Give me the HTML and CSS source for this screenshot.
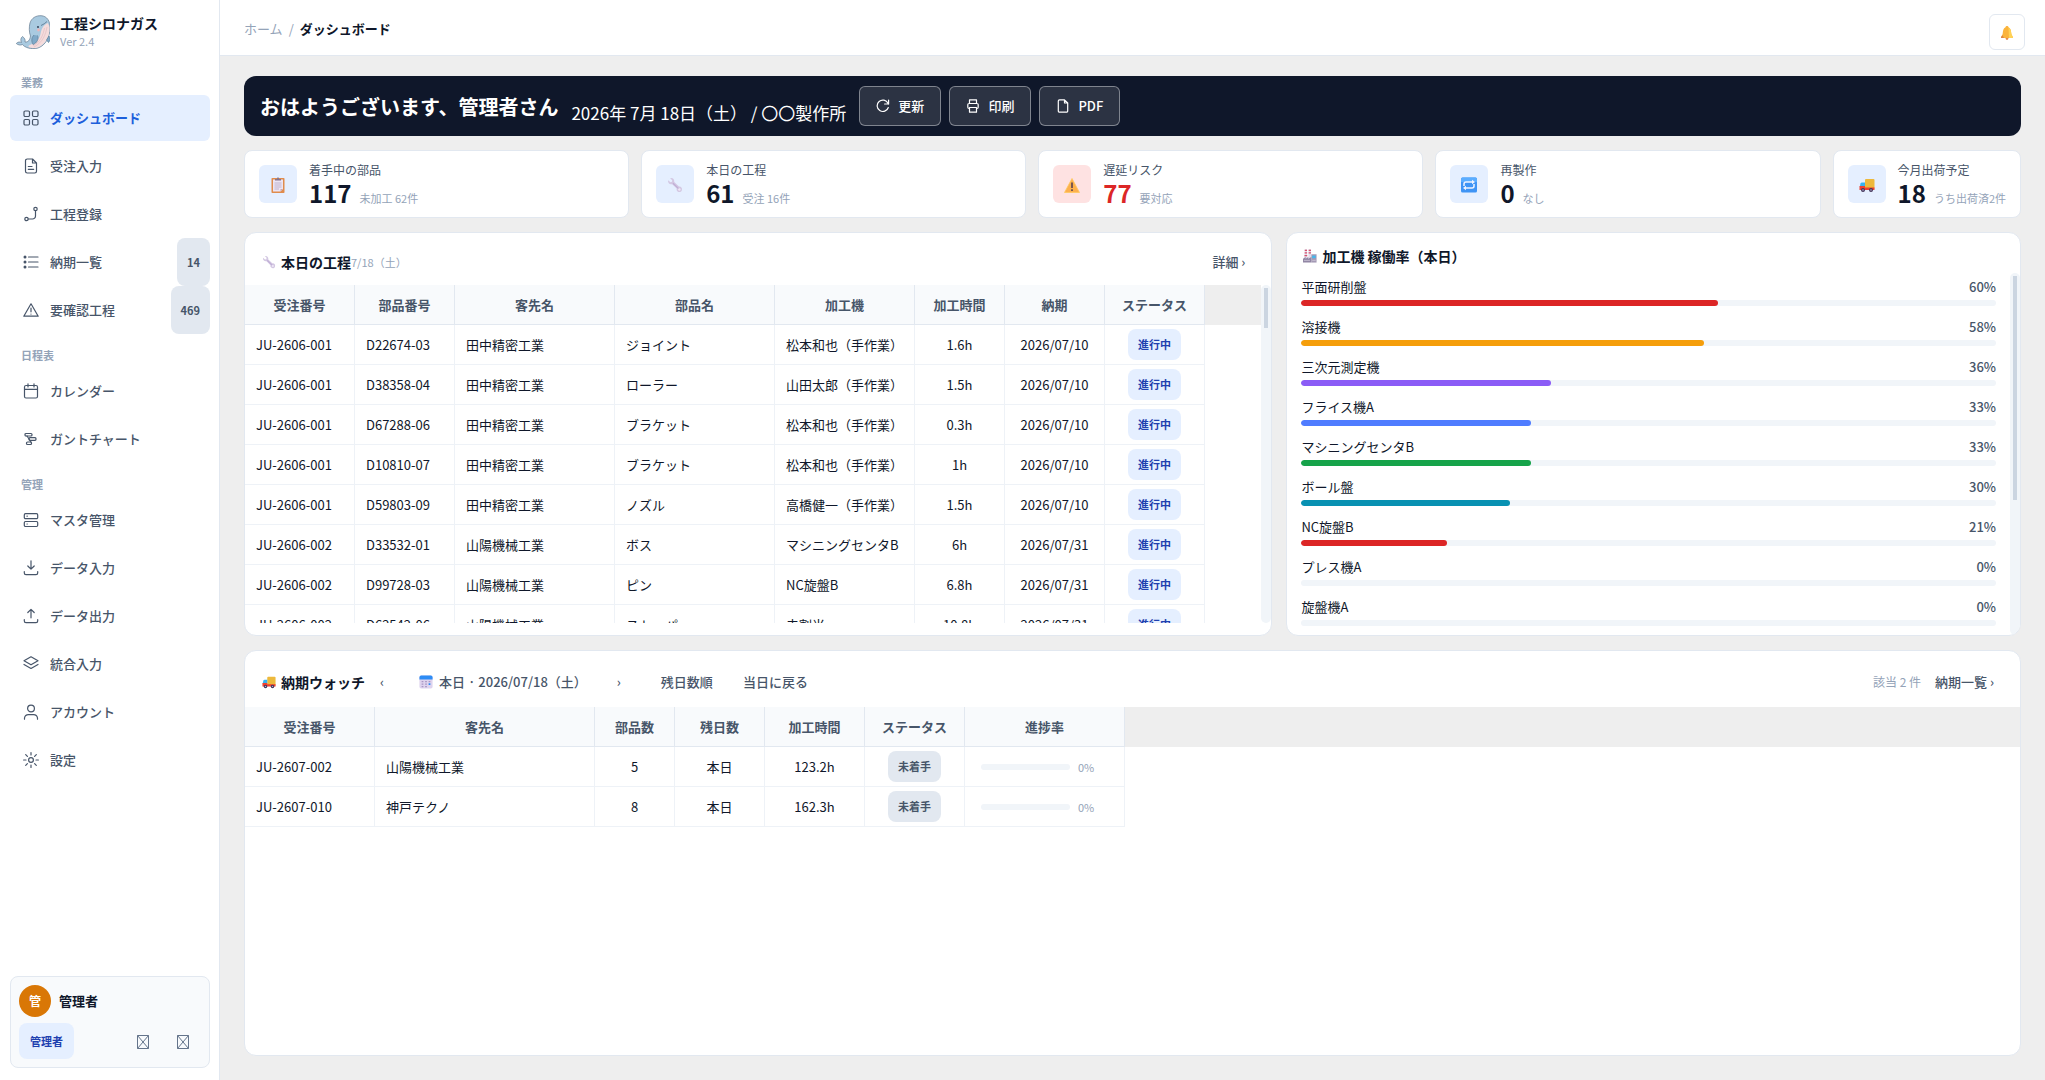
FILE: index.html
```
<!DOCTYPE html>
<html lang="ja">
<head>
    <meta charset="UTF-8">
    <meta name="viewport" content="width=device-width, initial-scale=1.0">
    <title>ダッシュボード - 工程シロナガス</title>
    <link rel="stylesheet" href="styles.css">
</head>
<body>
    <!-- Shared pictograms -->
    <svg class="symbols" aria-hidden="true">
        <symbol id="wrench" viewBox="0 0 16 16">
            <path d="M1.2 3.2 3.4 5.2 5 4.8 5.2 3.2 3.2 1.2C5.600.6 7.600 2.200 7.200 5L12 9.600C14 9.300 15.600 11.200 14.800 13.400 13.900 15.600 11 15.600 9.900 13.800 9.500 13 9.500 12.300 9.700 11.600L5.200 7.200C2.800 7.600.6 5.800 1.200 3.200Z" fill="#d3c7e2"/>
            <path d="M6 6.200 11.500 11.600" stroke="#bfaed6" stroke-width="1.200"/>
            <circle cx="12.400" cy="12.500" r="1.200" fill="#efe8f6"/>
        </symbol>
        <symbol id="truck" viewBox="0 0 16 16">
            <rect x="6" y="2" width="9.500" height="10" rx="1" fill="#edb93c"/>
            <path d="M1.500 6.500Q1.800 5.500 3 5.500H6V10H.8Z" fill="#35b2ef"/>
            <path d="M.5 9H6V10.500H15.500V13H.5Z" fill="#f0402f"/>
            <circle cx="4" cy="13" r="2" fill="#43355c"/>
            <circle cx="4" cy="13" r=".8" fill="#b9aecb"/>
            <circle cx="12" cy="13" r="2" fill="#43355c"/>
            <circle cx="12" cy="13" r=".8" fill="#b9aecb"/>
        </symbol>
    </svg>

    <aside class="sidebar">
        <div class="brand">
            <svg class="brand-logo" viewBox="0 0 34 34" aria-hidden="true">
                <path d="M.3 28.500C2 26.500 4 27 5.500 27.500 4.500 25.500 4.500 23 6.500 21.500 8.500 23 9.500 24.500 9 27 12 27.500 14 25 14.500 21 13 17 13 12 14 8 15.500 3 20 .5 25 .7 31 1 34.200 6 34 13 33.800 22 30 30 22 33 15 35 8 32 6.500 29.500 4.500 30.500 2 30 .3 28.500Z" fill="#a9cae0" stroke="#71869a" stroke-width=".8"/>
                <path d="M31.500 8C26 11 25.500 15 24.500 19 23.500 24 20 27.500 13 30.500 11 32 15 33.500 20 33 29 31 34 22 33.500 12 33 10 32.500 9 31.500 8Z" fill="#f5dcdc"/>
                <path d="M31 12C29.500 20 27 27 18 32M28.500 13C27 21 24 27 17 31" fill="none" stroke="#dfbfc4" stroke-width=".7"/>
                <path d="M25 10.500Q28.500 9 31 6.500" fill="none" stroke="#55718b" stroke-width=".8"/>
                <circle cx="22" cy="12" r=".9" fill="#26364d"/>
                <circle cx="22.500" cy="15" r="1.400" fill="#ecb4b8"/>
                <path d="M18 20C15 23 15.500 27 17 29.500 21 28 23 24 21.500 20.500M33 21C34.500 23 34 26 32.500 27.500L30.500 25Z" fill="#7fa9c8" stroke="#5f7f9a" stroke-width=".7"/>
            </svg>
            <div>
                <div class="brand-name">工程シロナガス</div>
                <div class="brand-version">Ver 2.4</div>
            </div>
        </div>

        <nav class="nav">
            <h2 class="nav-label">業務</h2>
            <a class="nav-item active" href="#">
                <svg class="icon" viewBox="0 0 16 16"><rect x="1" y="1" width="5.500" height="5.500" rx="1.200"/><rect x="9.500" y="1" width="5.500" height="5.500" rx="1.200"/><rect x="1" y="9.500" width="5.500" height="5.500" rx="1.200"/><rect x="9.500" y="9.500" width="5.500" height="5.500" rx="1.200"/></svg>
                ダッシュボード
            </a>
            <a class="nav-item" href="#">
                <svg class="icon" viewBox="0 0 16 16"><path d="M9.500 1H4.200A1.700 1.700 0 0 0 2.500 2.700V13.300A1.700 1.700 0 0 0 4.200 15H11.800A1.700 1.700 0 0 0 13.500 13.300V5ZM9.500 1V5H13.500M5.300 8.500H9M5.300 11.300H10.700"/></svg>
                受注入力
            </a>
            <a class="nav-item" href="#">
                <svg class="icon" viewBox="0 0 16 16"><circle cx="3.500" cy="13" r="1.700"/><circle cx="12.500" cy="3" r="1.700"/><path d="M5.200 13H9.500A3 3 0 0 0 12.500 10V4.700"/></svg>
                工程登録
            </a>
            <a class="nav-item" href="#">
                <svg class="icon" viewBox="0 0 16 16"><path d="M5.500 3H15M5.500 8H15M5.500 13H15"/><path class="dots" d="M2 3H2.010M2 8H2.010M2 13H2.010"/></svg>
                納期一覧
                <span class="nav-count">14</span>
            </a>
            <a class="nav-item" href="#">
                <svg class="icon" viewBox="0 0 16 16"><path d="M8 1.800 15.200 14.200H.8ZM8 6V9.800M8 12V12.100"/></svg>
                要確認工程
                <span class="nav-count">469</span>
            </a>

            <h2 class="nav-label">日程表</h2>
            <a class="nav-item" href="#">
                <svg class="icon" viewBox="0 0 16 16"><rect x="1.500" y="2.500" width="13" height="12.500" rx="1.500"/><path d="M1.500 6.300H14.500M5 .8V4M11 .8V4"/></svg>
                カレンダー
            </a>
            <a class="nav-item" href="#">
                <svg class="icon" viewBox="0 0 16 16"><rect x="2" y="2.500" width="7" height="2.500" rx="1"/><rect x="6" y="6.700" width="7" height="2.600" rx="1"/><rect x="3.500" y="11" width="5" height="2.500" rx="1"/><path d="M4 5 8 11"/></svg>
                ガントチャート
            </a>

            <h2 class="nav-label">管理</h2>
            <a class="nav-item" href="#">
                <svg class="icon" viewBox="0 0 16 16"><rect x="1.300" y="1.700" width="13.400" height="5" rx="1.200"/><rect x="1.300" y="9.500" width="13.400" height="5" rx="1.200"/><path d="M4 4.200H4.300M4 12H4.300"/></svg>
                マスタ管理
            </a>
            <a class="nav-item" href="#">
                <svg class="icon" viewBox="0 0 16 16"><path d="M8 .8V9M4.800 6 8 9.200 11.200 6M1.300 11.500V13A1.700 1.700 0 0 0 3 14.700H13A1.700 1.700 0 0 0 14.700 13V11.500"/></svg>
                データ入力
            </a>
            <a class="nav-item" href="#">
                <svg class="icon" viewBox="0 0 16 16"><path d="M8 9.800V1.300M4.800 4.500 8 1.300 11.200 4.500M1.300 11.500V13A1.700 1.700 0 0 0 3 14.700H13A1.700 1.700 0 0 0 14.700 13V11.500"/></svg>
                データ出力
            </a>
            <a class="nav-item" href="#">
                <svg class="icon" viewBox="0 0 16 16"><path d="M8 .8 15 4.800 8 8.800 1 4.800ZM1 8.500 8 12.500 15 8.500"/></svg>
                統合入力
            </a>
            <a class="nav-item" href="#">
                <svg class="icon" viewBox="0 0 16 16"><circle cx="8" cy="4.500" r="3.400"/><path d="M1.500 15.200V14A4 4 0 0 1 5.500 10.700H10.500A4 4 0 0 1 14.500 14V15.200"/></svg>
                アカウント
            </a>
            <a class="nav-item" href="#">
                <svg class="icon" viewBox="0 0 16 16"><circle cx="8" cy="8" r="2.400"/><path d="M8 .6V3M8 13V15.400M.6 8H3M13 8H15.400M2.700 2.700 4.400 4.400M11.600 11.600 13.300 13.300M2.700 13.300 4.400 11.600M11.600 4.400 13.300 2.700"/></svg>
                設定
            </a>
        </nav>

        <div class="user-card">
            <div class="user-row">
                <span class="avatar">管</span>
                <span class="user-name">管理者</span>
            </div>
            <div class="user-row">
                <span class="role">管理者</span>
                <div class="user-actions">
                    <button type="button" aria-label="パスワード変更"><svg viewBox="0 0 12 14"><path d="M.5.5H11.500V13.500H.5ZM.5.5 11.500 13.500M11.500.5.5 13.500"/></svg></button>
                    <button type="button" aria-label="ログアウト"><svg viewBox="0 0 12 14"><path d="M.5.5H11.500V13.500H.5ZM.5.5 11.500 13.500M11.500.5.5 13.500"/></svg></button>
                </div>
            </div>
        </div>
    </aside>

    <div class="page">
        <header class="topbar">
            <nav class="breadcrumb">
                <a href="#">ホーム</a>
                <span>/</span>
                <strong>ダッシュボード</strong>
            </nav>
            <button class="bell" type="button" aria-label="通知">
                <svg viewBox="0 0 16 16"><path d="M8 1C9 1 9.500 1.700 9.500 2.300 11.800 3.300 12 6 12.300 8.500 12.500 10.300 14 11 14 13H2C2 11 3.500 10.300 3.700 8.500 4 6 4.200 3.300 6.500 2.300 6.500 1.700 7 1 8 1Z" fill="#fbb43c"/><path d="M9.500 2.500C11.800 3.500 12 6 12.300 8.500 12.500 10.300 14 11 14 13H10Z" fill="#ffd256"/><path d="M2 13C2 11.800 2.800 11 3.300 10.300L5 13Z" fill="#dc8446"/><path d="M6.500 13H9.500Q9.300 15 8 15T6.500 13Z" fill="#e58a4a"/></svg>
            </button>
        </header>

        <main class="content">
            <section class="hero">
                <h1>おはようございます、管理者さん</h1>
                <p>2026年 7月 18日（土） / 〇〇製作所</p>
                <div class="hero-actions">
                    <button type="button"><svg class="icon" viewBox="0 0 14 14"><path d="M12.600 1V5H8.600M12.300 8.500A5.700 5.700 0 1 1 12 4.300L12.600 5"/></svg>更新</button>
                    <button type="button"><svg class="icon" viewBox="0 0 14 14"><path d="M3.500 4.500V.8H10.500V4.500M3.500 9.500H3A1.200 1.200 0 0 1 1.800 8.300V5.700A1.200 1.200 0 0 1 3 4.500H11A1.200 1.200 0 0 1 12.200 5.700V8.300A1.200 1.200 0 0 1 11 9.500H10.500M3.500 8.500H10.500V13.200H3.500Z"/></svg>印刷</button>
                    <button type="button"><svg class="icon" viewBox="0 0 14 14"><path d="M8.500.8H3.500A1.200 1.200 0 0 0 2.300 2V12A1.200 1.200 0 0 0 3.500 13.200H10.500A1.200 1.200 0 0 0 11.700 12V4ZM8.500.8V4H11.700"/></svg>PDF</button>
                </div>
            </section>

            <section class="stats">
                <div class="stat">
                    <span class="stat-icon"><svg viewBox="0 0 16 16"><rect x="1.500" y="1" width="13" height="15" rx=".8" fill="#e08c4d"/><path d="M3 2.500H13V12L10.500 14.500H3Z" fill="#ece4f3"/><path d="M10.500 14.500V12H13Z" fill="#c8a9b5"/><path d="M5 3.500V2H7Q7 .3 8 .3T9 2H11V3.500Z" fill="#85758f"/><path d="M4.500 6H11.500M4.500 8H11.500M4.500 10H11.500M4.500 12H9" stroke="#b6a6c4" stroke-width=".8"/></svg></span>
                    <div>
                        <div class="stat-label">着手中の部品</div>
                        <div class="stat-value">117 <small>未加工 62件</small></div>
                    </div>
                </div>
                <div class="stat">
                    <span class="stat-icon"><svg><use href="#wrench"/></svg></span>
                    <div>
                        <div class="stat-label">本日の工程</div>
                        <div class="stat-value">61 <small>受注 16件</small></div>
                    </div>
                </div>
                <div class="stat danger">
                    <span class="stat-icon"><svg viewBox="0 0 16 16"><path d="M8 1.500 15.500 15.500H.5Z" fill="#fdb04d" stroke="#ffc95e" stroke-width=".8" stroke-linejoin="round"/><path d="M7.200 5.500H8.800V11H7.200ZM7.200 12.300H8.800V14H7.200Z" fill="#59424f"/></svg></span>
                    <div>
                        <div class="stat-label">遅延リスク</div>
                        <div class="stat-value">77 <small>要対応</small></div>
                    </div>
                </div>
                <div class="stat">
                    <span class="stat-icon"><svg viewBox="0 0 16 16"><rect y=".5" width="16" height="15" rx="1.500" fill="#3f94f5"/><path d="M0 2A1.500 1.500 0 0 1 1.500.5H14.500A1.500 1.500 0 0 1 16 2V5H0Z" fill="#5badff"/><path d="M3 9V7A2 2 0 0 1 5 5H12M13 7V9A2 2 0 0 1 11 11H4" fill="none" stroke="#f0f3ff" stroke-width="1.500"/><path d="M11 2.800 14 5 11 7.200ZM5 8.800 2 11 5 13.200Z" fill="#f0f3ff"/></svg></span>
                    <div>
                        <div class="stat-label">再製作</div>
                        <div class="stat-value">0 <small>なし</small></div>
                    </div>
                </div>
                <div class="stat">
                    <span class="stat-icon"><svg><use href="#truck"/></svg></span>
                    <div>
                        <div class="stat-label">今月出荷予定</div>
                        <div class="stat-value">18 <small>うち出荷済2件</small></div>
                    </div>
                </div>
            </section>

            <div class="panels">
                <section class="panel">
                    <div class="panel-head">
                        <svg class="emoji"><use href="#wrench"/></svg>
                        <h2>本日の工程</h2><span class="muted">7/18（土）</span>
                        <a class="more" href="#">詳細 ›</a>
                    </div>
                    <div class="scroll-area">
                        <div class="table-wrap">
                            <table>
                                <colgroup><col class="w110"><col class="w100"><col class="w160"><col class="w160"><col class="w140"><col class="w90"><col class="w100"><col class="w100"><col></colgroup>
                                <thead>
                                    <tr><th>受注番号</th><th>部品番号</th><th>客先名</th><th>部品名</th><th>加工機</th><th>加工時間</th><th>納期</th><th>ステータス</th><td></td></tr>
                                </thead>
                                <tbody>
                                    <tr><td>JU-2606-001</td><td>D22674-03</td><td>田中精密工業</td><td>ジョイント</td><td>松本和也（手作業）</td><td class="mid">1.6h</td><td class="mid">2026/07/10</td><td class="mid"><span class="tag">進行中</span></td><td></td></tr>
                                    <tr><td>JU-2606-001</td><td>D38358-04</td><td>田中精密工業</td><td>ローラー</td><td>山田太郎（手作業）</td><td class="mid">1.5h</td><td class="mid">2026/07/10</td><td class="mid"><span class="tag">進行中</span></td><td></td></tr>
                                    <tr><td>JU-2606-001</td><td>D67288-06</td><td>田中精密工業</td><td>ブラケット</td><td>松本和也（手作業）</td><td class="mid">0.3h</td><td class="mid">2026/07/10</td><td class="mid"><span class="tag">進行中</span></td><td></td></tr>
                                    <tr><td>JU-2606-001</td><td>D10810-07</td><td>田中精密工業</td><td>ブラケット</td><td>松本和也（手作業）</td><td class="mid">1h</td><td class="mid">2026/07/10</td><td class="mid"><span class="tag">進行中</span></td><td></td></tr>
                                    <tr><td>JU-2606-001</td><td>D59803-09</td><td>田中精密工業</td><td>ノズル</td><td>高橋健一（手作業）</td><td class="mid">1.5h</td><td class="mid">2026/07/10</td><td class="mid"><span class="tag">進行中</span></td><td></td></tr>
                                    <tr><td>JU-2606-002</td><td>D33532-01</td><td>山陽機械工業</td><td>ボス</td><td>マシニングセンタB</td><td class="mid">6h</td><td class="mid">2026/07/31</td><td class="mid"><span class="tag">進行中</span></td><td></td></tr>
                                    <tr><td>JU-2606-002</td><td>D99728-03</td><td>山陽機械工業</td><td>ピン</td><td>NC旋盤B</td><td class="mid">6.8h</td><td class="mid">2026/07/31</td><td class="mid"><span class="tag">進行中</span></td><td></td></tr>
                                    <tr><td>JU-2606-002</td><td>D62542-06</td><td>山陽機械工業</td><td>ストッパ</td><td>未割当</td><td class="mid">10.8h</td><td class="mid">2026/07/31</td><td class="mid"><span class="tag">進行中</span></td><td></td></tr>
                                </tbody>
                            </table>
                        </div>
                        <div class="scrollbar"><div class="thumb thumb-short"></div></div>
                    </div>
                </section>

                <section class="panel">
                    <div class="panel-head compact">
                        <svg class="emoji" viewBox="0 0 16 16"><path d="M2 0H4.500L5 11H1.500ZM6.500 0H9L9.500 11H6Z" fill="#e3dcea"/><path d="M2 1.500H4.600M1.900 4.500H4.700M6.500 1.500H9.100M6.400 4.500H9.200M1.700 7.500H4.800" stroke="#d6526f" stroke-width="1.500"/><path d="M9.500 6H15.500V15.500H9.500Z" fill="#a49ab5"/><path d="M0 11 3 9V11L6 9V11L9.500 9V15.500H0Z" fill="#9186a4"/><path d="M10.500 7.500H14.500V10.500H10.500Z" fill="#43b7ed"/><path d="M1 13H8M10.500 13H14.500" stroke="#c9c1d4"/></svg>
                        <h2>加工機 稼働率（本日）</h2>
                    </div>
                    <div class="scroll-area flush">
                        <ul class="machines">
                            <li><span>平面研削盤</span><b>60%</b><div class="bar"><i class="red" style="width: 60%"></i></div></li>
                            <li><span>溶接機</span><b>58%</b><div class="bar"><i class="amber" style="width: 58%"></i></div></li>
                            <li><span>三次元測定機</span><b>36%</b><div class="bar"><i class="purple" style="width: 36%"></i></div></li>
                            <li><span>フライス機A</span><b>33%</b><div class="bar"><i class="blue" style="width: 33%"></i></div></li>
                            <li><span>マシニングセンタB</span><b>33%</b><div class="bar"><i class="green" style="width: 33%"></i></div></li>
                            <li><span>ボール盤</span><b>30%</b><div class="bar"><i class="teal" style="width: 30%"></i></div></li>
                            <li><span>NC旋盤B</span><b>21%</b><div class="bar"><i class="red" style="width: 21%"></i></div></li>
                            <li><span>プレス機A</span><b>0%</b><div class="bar"></div></li>
                            <li><span>旋盤機A</span><b>0%</b><div class="bar"></div></li>
                        </ul>
                        <div class="scrollbar"><div class="thumb thumb-long"></div></div>
                    </div>
                </section>
            </div>

            <section class="panel watch">
                <div class="panel-head tall">
                    <svg class="emoji"><use href="#truck"/></svg>
                    <h2>納期ウォッチ</h2>
                    <button class="flat" type="button" aria-label="前日">‹</button>
                    <button class="flat date" type="button">
                        <svg class="emoji" viewBox="0 0 16 16"><rect x=".5" y=".5" width="15" height="15" rx="2" fill="#ded3ee"/><path d="M.5 5V2.500A2 2 0 0 1 2.500.5H13.500A2 2 0 0 1 15.500 2.500V5Z" fill="#2d8cf5"/><path d="M3 7.500H5M7 7.500H9M11 7.500H13M3 10.500H5M7 10.500H9M3 13.200H5M7 13.200H9" stroke="#a997c4" stroke-width="1.500"/><path d="M11 10.500H13" stroke="#2d8cf5" stroke-width="2"/></svg>
                        本日 · 2026/07/18（土）
                    </button>
                    <button class="flat" type="button" aria-label="翌日">›</button>
                    <button class="flat sort" type="button">残日数順</button>
                    <button class="flat" type="button">当日に戻る</button>
                    <span class="hits">該当 2 件</span>
                    <a class="more" href="#">納期一覧 ›</a>
                </div>
                <div class="table-wrap">
                    <table>
                        <colgroup><col class="w130"><col class="w220"><col class="w80"><col class="w90"><col class="w100"><col class="w100"><col class="w160"><col></colgroup>
                        <thead>
                            <tr><th>受注番号</th><th>客先名</th><th>部品数</th><th>残日数</th><th>加工時間</th><th>ステータス</th><th>進捗率</th><td></td></tr>
                        </thead>
                        <tbody>
                            <tr><td>JU-2607-002</td><td>山陽機械工業</td><td class="mid">5</td><td class="mid">本日</td><td class="mid">123.2h</td><td class="mid"><span class="tag idle">未着手</span></td><td><div class="progress"><div class="bar"></div><span>0%</span></div></td><td></td></tr>
                            <tr><td>JU-2607-010</td><td>神戸テクノ</td><td class="mid">8</td><td class="mid">本日</td><td class="mid">162.3h</td><td class="mid"><span class="tag idle">未着手</span></td><td><div class="progress"><div class="bar"></div><span>0%</span></div></td><td></td></tr>
                        </tbody>
                    </table>
                </div>
            </section>
        </main>
    </div>
</body>
</html>
```
FILE: styles.css
```
:root {
    --ink: #0f172a;
    --text: #475569;
    --muted: #94a3b8;
    --line: #e2e8f0;
    --line-light: #eef2f7;
    --surface: #f8fafc;
    --track: #f1f5f9;
    --primary: #1d5fdb;
    --primary-soft: #e5efff;
    --page-bg: #eeeeee;
}

* {
    box-sizing: border-box;
    margin: 0;
    padding: 0;
}

body {
    display: flex;
    height: 100vh;
    background: var(--page-bg);
    color: var(--ink);
    font-family: "Noto Sans CJK JP", "Noto Sans", sans-serif;
    font-size: 13px;
    line-height: 20px;
}

button {
    font: inherit;
    color: inherit;
    background: none;
    border: none;
    cursor: pointer;
}

a {
    color: inherit;
    text-decoration: none;
}

.symbols {
    position: absolute;
    width: 0;
    height: 0;
}

.icon {
    flex: none;
    width: 16px;
    height: 16px;
    fill: none;
    stroke: currentColor;
    stroke-width: 1.2;
    stroke-linecap: round;
    stroke-linejoin: round;
}

.icon .dots {
    stroke-width: 3;
}

.emoji {
    flex: none;
    width: 14px;
    height: 14px;
}

/* Sidebar */
.sidebar {
    display: flex;
    flex-direction: column;
    flex: none;
    width: 220px;
    padding: 0 9px 12px 10px;
    background: white;
    border-right: 1px solid var(--line);
}

.brand {
    display: flex;
    align-items: center;
    gap: 10px;
    height: 61px;
    padding: 2px 6px 0;
}

.brand-logo {
    width: 34px;
    height: 34px;
}

.brand-name {
    font-size: 14px;
    font-weight: 700;
    line-height: 18px;
}

.brand-version {
    color: var(--muted);
    font-size: 11px;
    line-height: 18px;
}

.nav {
    display: flex;
    flex-direction: column;
    flex: 1;
}

.nav-label {
    padding: 13px 11px 4px;
    color: var(--muted);
    font-size: 11px;
    font-weight: 700;
    line-height: 16px;
}

.nav-item {
    display: flex;
    align-items: center;
    gap: 11px;
    height: 46px;
    margin: 1px 0;
    padding-left: 13px;
    border-radius: 6px;
    color: var(--text);
    font-weight: 500;
}

.nav-item .icon {
    color: var(--text);
}

.nav-item.active {
    background: var(--primary-soft);
    color: var(--primary);
    font-weight: 700;
}

.nav-count {
    margin: -1px 0 -1px auto;
    padding: 0 10px;
    background: var(--line);
    border-radius: 8px;
    font-size: 11px;
    font-weight: 700;
    line-height: 48px;
}

.user-card {
    padding: 8px;
    background: var(--surface);
    border: 1px solid var(--line);
    border-radius: 8px;
}

.user-row {
    display: flex;
    align-items: center;
    gap: 8px;
}

.user-row + .user-row {
    margin-top: 6px;
}

.avatar {
    width: 32px;
    height: 32px;
    background: #d97706;
    border-radius: 50%;
    color: white;
    font-size: 12px;
    font-weight: 700;
    line-height: 32px;
    text-align: center;
}

.user-name {
    font-weight: 700;
}

.role {
    padding: 0 11px;
    background: var(--primary-soft);
    border-radius: 8px;
    color: #1e40af;
    font-size: 11px;
    font-weight: 700;
    line-height: 36px;
}

.user-actions {
    display: flex;
    margin-left: auto;
}

.user-actions button {
    display: flex;
    align-items: center;
    justify-content: center;
    width: 40px;
    height: 36px;
    padding: 2px 0 0 4px;
}

.user-actions svg {
    width: 12px;
    height: 14px;
    fill: none;
    stroke: #64748b;
}

/* Top bar */
.page {
    display: flex;
    flex-direction: column;
    flex: 1;
    min-width: 0;
}

.topbar {
    display: flex;
    align-items: center;
    justify-content: space-between;
    flex: none;
    height: 56px;
    padding: 2px 20px 0 24px;
    background: white;
    border-bottom: 1px solid var(--line);
}

.breadcrumb {
    display: flex;
    gap: 6px;
    color: var(--muted);
}

.breadcrumb strong {
    color: var(--ink);
}

.bell {
    display: flex;
    align-items: center;
    justify-content: center;
    width: 36px;
    height: 36px;
    margin-top: 6px;
    padding-top: 2px;
    border: 1px solid var(--line);
    border-radius: 6px;
}

.bell svg {
    width: 16px;
    height: 16px;
}

/* Content */
.content {
    display: flex;
    flex-direction: column;
    flex: 1;
    gap: 14px;
    min-height: 0;
    padding: 20px 24px 24px;
}

.hero {
    display: flex;
    align-items: center;
    gap: 13px;
    flex: none;
    padding: 10px 16px;
    background: var(--ink);
    border-radius: 12px;
    color: white;
}

.hero h1 {
    padding-top: 2px;
    font-size: 20px;
    line-height: 30px;
}

.hero p {
    padding-top: 14px;
    font-size: 17px;
    line-height: 26px;
}

.hero-actions {
    display: flex;
    gap: 8px;
}

.hero-actions button {
    display: flex;
    align-items: center;
    gap: 8px;
    height: 40px;
    padding: 0 16px;
    background: rgba(255, 255, 255, 0.12);
    border: 1px solid rgba(255, 255, 255, 0.4);
    border-radius: 6px;
    font-weight: 500;
}

.hero-actions .icon {
    width: 14px;
    height: 14px;
}

.stats {
    display: grid;
    grid-template-columns: repeat(4, 1fr) auto;
    gap: 12px;
    flex: none;
}

.stat {
    display: flex;
    align-items: center;
    gap: 12px;
    padding: 10px 14px;
    background: white;
    border: 1px solid var(--line);
    border-radius: 8px;
}

.stat-icon {
    display: flex;
    align-items: center;
    justify-content: center;
    width: 38px;
    height: 38px;
    padding-top: 2px;
    background: var(--primary-soft);
    border-radius: 6px;
}

.stat-icon svg {
    width: 16px;
    height: 16px;
}

.stat-label {
    color: var(--text);
    font-size: 12px;
    line-height: 18px;
}

.stat-value {
    display: flex;
    align-items: baseline;
    gap: 8px;
    font-size: 24px;
    font-weight: 700;
    line-height: 28px;
}

.stat-value small {
    color: var(--muted);
    font-size: 11px;
    font-weight: 400;
    line-height: 16px;
}

.danger .stat-icon {
    background: #fee2e2;
}

.danger .stat-value {
    color: #dc2626;
}

/* Panels */
.panels {
    display: grid;
    grid-template-columns: 7fr 5fr;
    grid-template-rows: minmax(0, 1fr);
    gap: 14px;
    flex: 1 1 0;
    min-height: 0;
}

.panel {
    display: flex;
    flex-direction: column;
    min-width: 0;
    min-height: 0;
    background: white;
    border: 1px solid var(--line);
    border-radius: 12px;
    overflow: hidden;
}

.watch {
    flex: 1 1 0;
}

.panel-head {
    display: flex;
    align-items: center;
    flex: none;
    height: 52px;
    padding: 6px 26px 0 17px;
}

.panel-head.compact {
    height: 40px;
    padding-left: 16px;
}

.panel-head.tall {
    height: 56px;
}

.panel-head h2 {
    margin-left: 5px;
    font-size: 14px;
}

.muted,
.hits {
    color: var(--muted);
    font-size: 11px;
}

.more {
    margin-left: auto;
    color: var(--text);
    font-weight: 500;
}

.hits {
    margin-left: auto;
    font-size: 12px;
}

.hits + .more {
    margin-left: 14px;
}

.flat {
    padding: 0 15px;
    color: var(--text);
    font-weight: 500;
}

.flat.date {
    display: flex;
    align-items: center;
    gap: 6px;
    margin-left: 5px;
}

.flat.sort {
    margin-left: 10px;
}

.scroll-area {
    display: flex;
    flex: 1;
    min-height: 0;
    margin-bottom: 12px;
}

.scroll-area.flush {
    margin-bottom: 0;
}

.scrollbar {
    flex: none;
    width: 10px;
    padding: 3px;
    background: var(--track);
    border-radius: 6px;
}

.thumb {
    background: #cbd5e1;
}

.thumb-short {
    height: 12%;
}

.thumb-long {
    height: 63%;
}

/* Tables */
.table-wrap {
    flex: 1;
    min-width: 0;
    overflow: hidden;
}

table {
    width: 100%;
    table-layout: fixed;
    border-collapse: separate;
    border-spacing: 0;
}

.w80 { width: 80px; }
.w90 { width: 90px; }
.w100 { width: 100px; }
.w110 { width: 110px; }
.w130 { width: 130px; }
.w140 { width: 140px; }
.w160 { width: 160px; }
.w220 { width: 220px; }

th,
td {
    height: 40px;
    padding: 0 11px;
    border-right: 1px solid var(--line-light);
    border-bottom: 1px solid var(--line-light);
    text-align: left;
    white-space: nowrap;
}

th {
    background: var(--surface);
    border-color: var(--line);
    color: var(--text);
    text-align: center;
}

td:last-child {
    border: none;
}

thead td {
    background: var(--page-bg);
}

.mid {
    text-align: center;
}

.tag {
    display: inline-block;
    padding: 0 10px;
    background: var(--primary-soft);
    border-radius: 8px;
    color: #1e40af;
    font-size: 11px;
    font-weight: 700;
    line-height: 31px;
    vertical-align: middle;
}

.tag.idle {
    background: var(--line);
    color: var(--text);
}

.bar {
    height: 6px;
    background: var(--track);
    border-radius: 3px;
    overflow: hidden;
}

.bar i {
    display: block;
    height: 100%;
    border-radius: 3px;
}

.progress {
    display: flex;
    align-items: center;
    gap: 8px;
    padding: 0 5px;
}

.progress .bar {
    flex: 1;
}

.progress span {
    width: 30px;
    color: var(--muted);
    font-size: 11px;
}

/* Machine load */
.machines {
    flex: 1;
    padding: 4px 14px 0;
    list-style: none;
    overflow: hidden;
}

.machines li {
    display: grid;
    grid-template-columns: 1fr auto;
    row-gap: 3px;
    margin-bottom: 11px;
}

.machines b {
    color: var(--text);
    font-weight: 500;
}

.machines .bar {
    grid-column: 1 / -1;
}

.red { background: #dc2626; }
.amber { background: #f59e0b; }
.purple { background: #8b5cf6; }
.blue { background: #4f7cff; }
.green { background: #16a34a; }
.teal { background: #0891b2; }
```
